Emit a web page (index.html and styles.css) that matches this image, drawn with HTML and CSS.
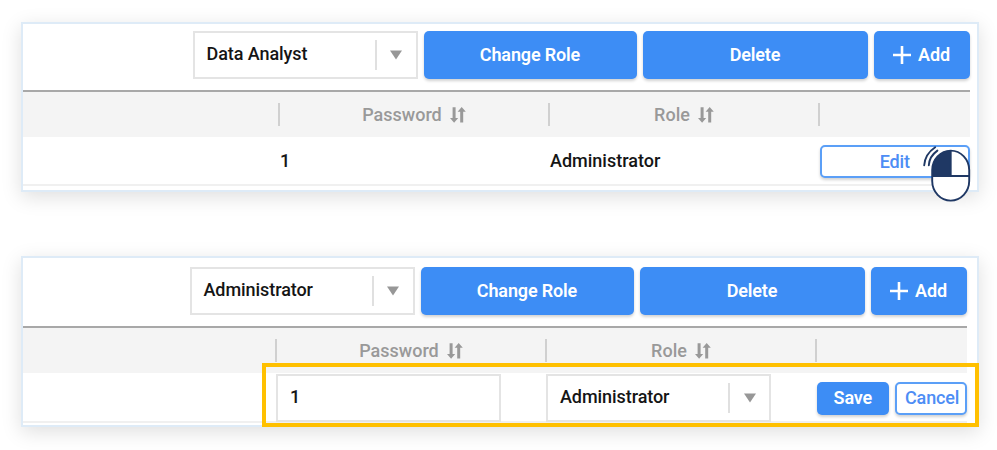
FILE: index.html
```html
<!DOCTYPE html>
<html lang="en">
<head>
<meta charset="utf-8">
<title>User roles</title>
<link rel="stylesheet" href="styles.css">
</head>
<body>
<svg class="defs" aria-hidden="true">
  <symbol id="sort" viewBox="0 0 16 16">
    <path d="M4.1 0.3V12M11.7 15.5V4" fill="none" stroke="currentColor" stroke-width="3"/>
    <path d="M0 11H8.2L4.1 15.8ZM7.6 4.8H15.8L11.7 0Z" fill="currentColor"/>
  </symbol>
  <symbol id="plus" viewBox="0 0 18 18"><path d="M9 0V18M0 9H18" fill="none" stroke="currentColor" stroke-width="2.6"/></symbol>
  <symbol id="caret" viewBox="0 0 12 10"><path d="M0 0.5H12L6 9.5Z" fill="currentColor"/></symbol>
</svg>

<section class="panel">
  <div class="toolbar">
    <div class="select"><span class="value">Data Analyst</span><span class="arrow"><svg><use href="#caret"/></svg></span></div>
    <button class="btn change">Change Role</button>
    <button class="btn delete">Delete</button>
    <button class="btn add"><svg><use href="#plus"/></svg>Add</button>
  </div>
  <div class="grid head">
    <div></div>
    <div class="th">Password<svg><use href="#sort"/></svg></div>
    <div class="th">Role<svg><use href="#sort"/></svg></div>
    <div class="th"></div>
  </div>
  <div class="grid row">
    <div></div>
    <div class="cell">1</div>
    <div class="cell">Administrator</div>
    <div class="actions"><button class="btn outline edit">Edit</button></div>
  </div>
  <svg class="mouse" viewBox="0 0 50 58">
    <rect x="9.2" y="5.6" width="37" height="50" rx="18.5" ry="19.5" fill="#fff"/>
    <path d="M9.2 31V24.1A18.5 18.5 0 0 1 27.7 5.6V31Z" fill="#1f3864"/>
    <g fill="none" stroke="#1f3864" stroke-width="1.9">
      <rect x="9.2" y="5.6" width="37" height="50" rx="18.5" ry="19.5"/>
      <path d="M9 31H46.4M27.7 5.6V31"/>
      <path d="M1.2 20.2C1.8 12.5 6.5 6 12.2 2.2M5.8 20.2C6.2 14.5 9.6 9 14.4 5.6" stroke-linecap="round"/>
    </g>
  </svg>
</section>

<section class="panel second">
  <div class="toolbar">
    <div class="select"><span class="value">Administrator</span><span class="arrow"><svg><use href="#caret"/></svg></span></div>
    <button class="btn change">Change Role</button>
    <button class="btn delete">Delete</button>
    <button class="btn add"><svg><use href="#plus"/></svg>Add</button>
  </div>
  <div class="grid head">
    <div></div>
    <div class="th">Password<svg><use href="#sort"/></svg></div>
    <div class="th">Role<svg><use href="#sort"/></svg></div>
    <div class="th"></div>
  </div>
  <div class="grid row">
    <div></div>
    <div class="field"><div class="select"><span class="value">1</span></div></div>
    <div class="field"><div class="select"><span class="value">Administrator</span><span class="arrow"><svg><use href="#caret"/></svg></span></div></div>
    <div class="actions"><button class="btn save">Save</button><button class="btn outline cancel">Cancel</button></div>
  </div>
  <div class="highlight"></div>
</section>
</body>
</html>
```
FILE: styles.css
```css
* { box-sizing: border-box; }
body {
  min-height: 450px;
  margin: 0;
  padding: 22px 18px 0 21px;
  background: #fff;
  color: #151515;
  font: 500 18px/24px Roboto, sans-serif;
}
.defs { position: absolute; width: 0; height: 0; }
.panel {
  position: relative;
  height: 170px;
  padding-right: 7.5px;
  border: 2px solid #deebf7;
  background: #fff;
  box-shadow: 0 5px 19px rgba(0, 0, 0, 0.13);
}
.second { height: 171px; margin-top: 64px; padding-right: 10.5px; }
.toolbar {
  display: flex;
  justify-content: flex-end;
  gap: 6px;
  height: 68px;
  padding-top: 7px;
  border-bottom: 2px solid #a8a8a8;
}
.second .toolbar { height: 70px; padding-top: 9px; }
.select {
  display: flex;
  align-items: center;
  width: 225px;
  height: 48px;
  padding-left: 12px;
  border: 2px solid #e4e4e4;
  background: #fff;
  letter-spacing: -0.07px;
}
.value { flex: 1; padding-bottom: 3px; }
.arrow {
  display: flex;
  align-items: center;
  justify-content: center;
  width: 41px;
  height: 30px;
  border-left: 2px solid #e0e0e0;
  color: #979797;
}
.arrow svg { width: 12px; height: 10px; }
.btn {
  display: flex;
  align-items: center;
  justify-content: center;
  height: 48px;
  padding: 0;
  border: 0;
  border-radius: 5px;
  background: #3d8df5;
  box-shadow: 0 2px 3px rgba(0, 0, 0, 0.18);
  color: #fff;
  font: inherit;
  font-weight: 600;
  letter-spacing: -0.15px;
}
.change { width: 213px; }
.delete { width: 225px; }
.add { width: 96px; gap: 7px; }
.add svg { width: 18px; height: 18px; }
.grid {
  display: grid;
  grid-template-columns: 1fr 270px 270px 151.5px;
}
.head { height: 45px; background: #f4f4f4; color: #999; }
.th {
  display: flex;
  align-items: center;
  justify-content: center;
  gap: 8px;
  height: 23px;
  margin-top: 11px;
  border-left: 2px solid #d0d0d0;
}
.th svg { width: 16px; height: 16px; }
.row { height: 49px; border-bottom: 2px solid #f0f0f0; }
.second .row { height: 50px; }
.cell { align-self: center; padding: 1px 0 0 2px; }
.field { padding: 1px 0 0 1px; }
.actions { display: flex; align-items: center; gap: 6px; padding: 2px 0 0 2px; }
.second .actions { padding-top: 1px; }
.actions .btn { height: 33px; }
.actions .outline { border: 2px solid #5b9ff7; background: #fff; color: #4d8df5; font-weight: 500; }
.edit { width: 150px; }
.save { width: 72px; }
.actions .cancel { width: 72px; padding-left: 3px; }
.mouse { position: absolute; left: 900px; top: 121px; width: 50px; height: 58px; }
.highlight {
  position: absolute;
  left: 239px;
  top: 105px;
  width: 717px;
  height: 64px;
  border: 4px solid #ffc000;
}
```
